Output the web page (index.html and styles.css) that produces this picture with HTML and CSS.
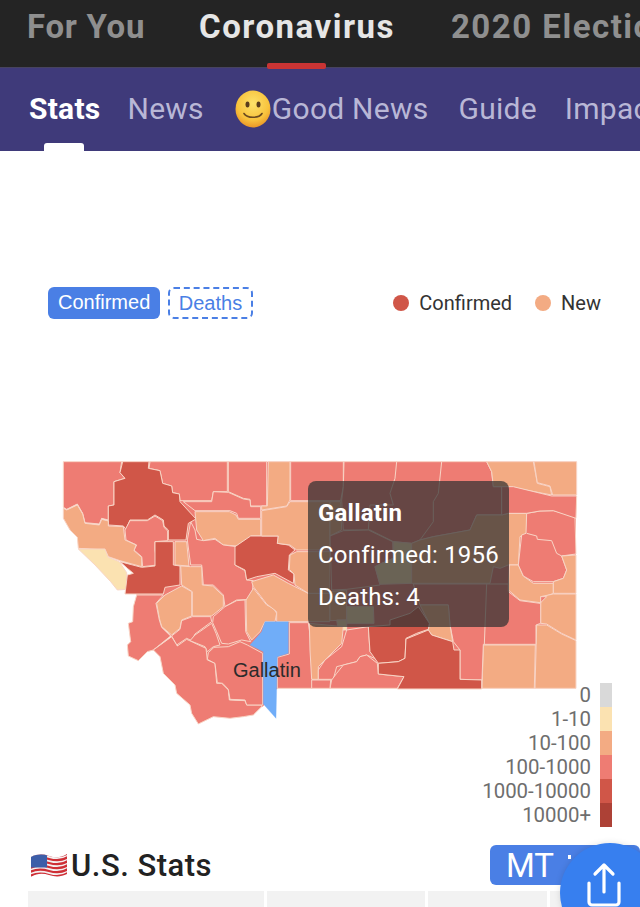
FILE: index.html
```html
<!DOCTYPE html>
<html lang="en">
<head>
<meta charset="utf-8">
<title>Coronavirus Stats</title>
<link rel="stylesheet" href="styles.css">
</head>
<body>
<div class="page">
  <nav class="topnav">
    <span class="toptab">For You</span>
    <span class="toptab active">Coronavirus</span>
    <span class="toptab wide">2020 Election</span>
  </nav>
  <nav class="subnav">
    <span class="subtab active">Stats</span>
    <span class="subtab">News</span>
    <span class="subtab goodnews"><svg class="smile" viewBox="0 0 36 38"><defs><radialGradient id="fg" cx="50%" cy="35%" r="70%"><stop offset="0" stop-color="#fde26a"/><stop offset=".65" stop-color="#f8c23c"/><stop offset="1" stop-color="#e78b22"/></radialGradient></defs><ellipse cx="18" cy="19" rx="17.5" ry="18.5" fill="url(#fg)"/><ellipse cx="12.5" cy="14.5" rx="2" ry="3" fill="#5a3d1c"/><ellipse cx="23.500" cy="14.500" rx="2" ry="3" fill="#5a3d1c"/><path d="M9 23.500c3 5 15 5 18 0" fill="none" stroke="#6b4a20" stroke-width="1.600" stroke-linecap="round"/></svg>Good News</span>
    <span class="subtab guide">Guide</span>
    <span class="subtab">Impact</span>
  </nav>
  <main class="content">
    <div class="toolbar">
      <div class="toggles">
        <span class="toggle on">Confirmed</span>
        <span class="toggle off">Deaths</span>
      </div>
      <div class="keys">
        <span class="key"><i class="dot dot-confirmed"></i>Confirmed</span>
        <span class="key"><i class="dot dot-new"></i>New</span>
      </div>
    </div>
    <div class="mapwrap">
      <svg class="map" viewBox="0 450 640 290" width="640" height="290">
        <g transform="translate(40 450) scale(.33333)">
          <polygon class="s base" points="205,35 870,35 870,715 712,715 668,770 500,700 395,560 290,435 262,300 205,225"/>
          <polygon class="s" points="70,35 245,35 240,68 255,85 222,95 222,165 205,168 205,210 185,205 178,222 135,218 128,190 112,162 80,178 70,172"/>
          <polygon class="s" points="330,35 562,35 562,125 520,125 515,152 420,152 418,132 398,128 395,108 368,100 360,62 327,55"/>
          <polygon class="s" points="565,35 680,35 680,168 632,168 630,148 610,145 565,125"/>
          <polygon class="o" points="685,35 750,35 750,150 740,168 665,180 665,168 682,168"/>
          <polygon class="s" points="515,155 520,125 565,127 610,147 630,150 632,170 662,170 662,205 595,205 590,190 570,182 465,182 430,155"/>
          <polygon class="o" points="465,185 568,185 588,195 595,208 662,208 662,258 632,258 620,272 590,288 550,285 525,265 490,272 470,240"/>
          <polygon class="s" points="452,215 465,240 470,268 490,272 525,268 550,285 590,290 585,345 615,362 620,390 640,392 635,448 590,450 555,470 550,435 520,405 490,405 485,345 452,345 442,270"/>
          <polygon class="d" points="248,35 327,35 325,55 360,62 368,100 395,108 398,128 418,132 420,155 468,207 445,220 438,270 385,270 385,240 372,228 370,210 345,195 322,210 270,210 258,238 250,228 205,225 205,168 222,165 222,95 255,85 240,68"/>
          <polygon class="s" points="270,212 322,212 345,198 368,212 372,232 383,243 383,272 345,275 345,300 352,345 308,350 305,320 282,300 290,285 258,270 255,240"/>
          <polygon class="o" points="70,175 80,180 112,165 128,192 135,220 178,225 185,208 205,213 205,228 250,230 255,270 288,285 282,302 305,322 305,350 240,332 205,320 195,300 115,295 112,262 90,240 70,205"/>
          <polygon class="c" points="115,297 195,297 205,322 238,335 260,368 262,418 232,420 212,395 165,345"/>
          <polygon class="d" points="240,335 305,352 345,348 345,275 400,275 400,345 420,348 420,405 375,412 370,432 255,432 262,375 280,370 262,355"/>
          <polygon class="o" points="405,275 440,275 447,348 405,345"/>
          <polygon class="d" points="585,290 632,258 715,258 712,280 745,285 765,300 748,315 745,360 762,372 760,400 705,370 650,380 620,390 615,360 585,345"/>
          <polygon class="o" points="452,350 485,350 487,405 518,408 550,438 550,470 515,498 457,498 457,425 425,405 422,348"/>
          <polygon class="o" points="425,408 455,425 455,498 425,510 420,535 395,555 365,530 358,505 350,460 375,435"/>
          <polygon class="s" points="290,435 370,435 348,460 358,510 365,532 392,558 340,600 322,605 295,632 265,618 262,585 272,575 265,520 278,515 280,470"/>
          <polygon class="s" points="425,512 457,500 512,500 515,515 465,552 455,572 440,565 410,585 395,558 420,538"/>
          <polygon class="s" points="518,518 520,500 555,470 590,452 615,450 617,545 632,575 605,570 565,582 545,580 530,545"/>
          <polygon class="s" points="465,555 515,520 528,550 540,585 520,590 502,605 495,590 450,572"/>
          <polygon class="s" points="395,560 412,588 440,568 498,595 502,630 525,640 530,700 545,700 565,720 568,750 615,752 620,765 665,765 665,770 640,795 610,800 570,805 520,800 475,822 455,790 450,765 410,730 405,705 370,670 360,620 340,600"/>
          <polygon class="s" points="505,608 522,592 565,590 600,575 622,585 668,610 668,765 620,765 615,750 570,748 565,718 548,700 532,698 525,640 502,628"/>
          <polygon class="o" points="618,450 640,415 660,440 680,465 700,475 710,490 705,515 675,515 660,545 635,570 620,545"/>
          <polygon class="o" points="635,395 700,375 745,400 765,410 805,430 870,430 870,515 710,515 710,485 680,462 640,410"/>
          <polygon class="o" points="665,182 740,170 750,155 870,155 870,300 770,300 750,285 712,280 715,258 665,258"/>
          <polygon class="o" points="770,305 870,305 870,430 805,430 765,405 762,372 748,358 750,315"/>
          <polygon class="s" points="712,622 748,612 748,518 805,518 815,590 818,688 818,715 712,715"/>
          <polygon class="b" points="675,515 745,515 745,610 712,620 708,805 670,762 670,605 630,585 665,545"/>
        </g>
        <g transform="translate(300 450) scale(.33333)">
          <polygon class="s base" points="90,35 828,35 828,715 90,715"/>
          <polygon class="s" points="-28,35 130,35 130,110 122,152 -28,152"/>
          <polygon class="o" points="90,155 122,155 125,240 90,258"/>
          <polygon class="s" points="132,35 560,35 575,65 580,110 605,110 605,195 530,195 510,240 400,260 360,270 335,280 280,275 210,240 130,240 125,150 130,110"/>
          <polyline class="l" points="290,35 285,85 270,130 280,165 210,165 205,240"/>
          <polyline class="l" points="425,35 415,130 400,155 400,215 360,270"/>
          <polygon class="s" points="90,258 130,242 205,240 278,275 280,325 245,340 225,350 240,405 140,418 95,420"/>
          <polygon class="c" points="280,275 335,280 335,400 240,403 225,350 245,340 280,325"/>
          <polygon class="o" points="90,425 140,420 140,510 90,512"/>
          <polygon class="c" points="140,470 220,470 222,520 140,520"/>
          <polygon class="c" points="110,510 140,510 140,540 115,540"/>
          <polygon class="o" points="335,280 360,270 400,260 510,240 530,195 605,195 625,190 680,190 680,250 660,260 655,345 625,345 600,355 580,350 570,400 335,400"/>
          <polygon class="o" points="628,345 655,345 670,378 700,400 760,400 760,430 740,438 720,458 660,450 625,420"/>
          <polygon class="s" points="680,190 720,183 760,182 825,200 828,312 785,318 800,360 790,385 760,395 700,395 670,378 655,345 665,255 678,250"/>
          <polyline class="l" points="680,250 710,258 712,268 755,272 770,310 785,318"/>
          <polygon class="o" points="560,35 700,35 712,100 750,110 755,135 625,110 580,110 575,65"/>
          <polygon class="o" points="702,35 830,35 830,135 758,135 750,108 712,98"/>
          <polygon class="s" points="605,110 640,110 755,138 830,138 828,205 760,182 720,183 680,190 625,190 605,195"/>
          <polygon class="o" points="785,318 828,315 828,430 760,430 760,395 790,385 800,360"/>
          <polygon class="o" points="722,440 760,432 828,432 828,570 785,550 740,522 722,520"/>
          <polygon class="o" points="710,525 740,525 785,552 828,572 828,715 705,715"/>
          <polygon class="o" points="550,585 706,585 703,715 546,715"/>
          <polygon class="s" points="340,402 625,402 625,425 660,452 720,460 740,440 722,440 722,520 708,525 708,583 550,583 546,690 480,688 480,600 460,575 450,525 445,465 360,465"/>
          <polyline class="l" points="560,402 553,583"/>
          <polygon class="o" points="28,520 130,530 125,580 75,630 55,650 55,688 35,688 30,600"/>
          <polygon class="s" points="140,540 205,530 210,605 235,630 200,615 180,620 170,635 110,650 100,688 55,688 55,660 75,630 125,590"/>
          <polygon class="s" points="232,640 200,615 180,620 170,635 130,645 110,670 95,690 90,715 292,715 312,680 235,672"/>
          <polygon class="s" points="35,690 92,690 90,715 35,715"/>
          <polygon class="o" points="360,465 445,465 450,525 458,575 395,555 385,540 388,520"/>
          <polygon class="d" points="270,510 330,490 355,470 388,520 385,538 350,550 318,565 315,625 295,635 235,640 210,605 205,530 270,525"/>
          <polygon class="d" points="318,567 385,540 395,555 458,575 462,600 480,600 480,688 545,690 545,717 292,717 312,680 235,672 235,640 295,635 315,625"/>
        </g>
        <text class="maplabel" x="233" y="677">Gallatin</text>
      </svg>
      <div class="tooltip">
        <div class="tip-title">Gallatin</div>
        <div class="tip-line">Confirmed: 1956</div>
        <div class="tip-line">Deaths: 4</div>
      </div>
      <div class="scale">
        <div class="scale-row"><span>0</span><i class="sw sw0"></i></div>
        <div class="scale-row"><span>1-10</span><i class="sw sw1"></i></div>
        <div class="scale-row"><span>10-100</span><i class="sw sw2"></i></div>
        <div class="scale-row"><span>100-1000</span><i class="sw sw3"></i></div>
        <div class="scale-row"><span>1000-10000</span><i class="sw sw4"></i></div>
        <div class="scale-row"><span>10000+</span><i class="sw sw5"></i></div>
      </div>
    </div>
    <div class="stats-head">
      <h2 class="stats-title"><svg class="flag" viewBox="0 0 38 26"><defs><clipPath id="wave"><path d="M1 5c6-3 12-3 18-1s12 2 18-2v20c-6 3-12 3-18 1s-12-2-18 2z"/></clipPath></defs><g clip-path="url(#wave)"><rect width="38" height="26" fill="#f4f0f0"/><g fill="none" stroke="#cf2f36" stroke-width="2.200"><path d="M0 4c6-3 12-3 19-1s13 2 19-2"/><path d="M0 8c6-3 12-3 19-1s13 2 19-2"/><path d="M0 12c6-3 12-3 19-1s13 2 19-2"/><path d="M0 16c6-3 12-3 19-1s13 2 19-2"/><path d="M0 20c6-3 12-3 19-1s13 2 19-2"/><path d="M0 24c6-3 12-3 19-1s13 2 19-2"/></g><rect width="17" height="14.500" y="1" fill="#3d5ea8"/></g></svg>U.S. Stats</h2>
      <span class="state-btn">MT<i class="caret"></i></span>
    </div>
    <div class="table-head">
      <span class="th"></span><span class="th"></span><span class="th"></span><span class="th"></span>
    </div>
  </main>
  <button class="fab" aria-label="Share"><svg class="share" viewBox="0 0 44 48"><path d="M19 31V4M10 13l9-9 9 9M4 22v19a3 3 0 0 0 3 3h24a3 3 0 0 0 3-3V22" fill="none" stroke="#fff" stroke-width="3.200" stroke-linecap="round" stroke-linejoin="round"/></svg></button>
</div>
</body>
</html>
```
FILE: styles.css
```css
* { box-sizing: border-box; }
html, body { margin: 0; padding: 0; background: #fff; }
.page { position: relative; width: 640px; height: 907px; overflow: hidden; font-family: Roboto, sans-serif; }

.topnav { display: flex; gap: 54px; height: 68px; padding: 8px 0 0 27px; background: #242424; border-bottom: 1px solid #47435f; white-space: nowrap; }
.toptab { position: relative; font-size: 33px; line-height: 38px; font-weight: 700; color: #8f8f8f; height: 59px; letter-spacing: .7px; }
.toptab.active { color: #e6e6e6; letter-spacing: 1.5px; margin-right: 2px; }
.toptab.wide { letter-spacing: 1.5px; }
.toptab.active::after { content: ""; position: absolute; left: 68px; width: 59px; top: 55px; height: 6px; border-radius: 2px; background: #c93434; }

.subnav { display: flex; gap: 30px; height: 83px; padding: 21px 0 0 29px; background: #3f3a7a; white-space: nowrap; }
.subtab { position: relative; font-size: 30px; letter-spacing: .25px; line-height: 40px; color: #b9b7d6; height: 40px; }
.subtab.active { color: #fff; font-weight: 700; margin-right: -3px; }
.subtab.active::after { content: ""; position: absolute; left: 15px; width: 40px; top: 54px; height: 8px; border-radius: 3px 3px 0 0; background: #fff; }
.goodnews { display: flex; align-items: center; }
.guide { margin-right: -2px; }
.smile { width: 36px; height: 38px; margin-right: 1px; margin-left: 1px; }

.content { display: block; }
.toolbar { display: flex; justify-content: space-between; align-items: center; height: 32px; margin-top: 136px; padding: 0 39px 0 48px; }
.toggles { display: flex; gap: 8px; }
.toggle { display: block; height: 32px; line-height: 31px; padding: 0 10px; font-family: "Liberation Sans", sans-serif; font-size: 20px; border-radius: 6px; }
.toggle.on { background: #4a7fe5; color: #fff; }
.toggle.off { border: 2px dashed #4a7fe5; color: #4a7fe5; line-height: 28px; padding: 0 8.5px; }
.keys { display: flex; gap: 23px; }
.key { display: flex; align-items: center; gap: 10px; font-size: 20px; line-height: 32px; color: #333; }
.dot { display: block; width: 16px; height: 16px; border-radius: 50%; }
.dot-confirmed { background: #d05648; }
.dot-new { background: #f3ab83; }

.mapwrap { position: relative; height: 377px; margin-top: 131px; }
.map { display: block; }
.map polygon, .l { stroke: #f8d5c6; stroke-width: 3; stroke-linejoin: round; }
.l { fill: none; }
.s { fill: #ee7c73; }
.o { fill: #f3ab83; }
.d { fill: #d05648; }
.c { fill: #fbe2b1; }
.b { fill: #70adf8; }
.map polygon.base { stroke: none; }
.map polygon.b { stroke: #70adf8; stroke-width: 1; }
.maplabel { font-family: "Liberation Sans", sans-serif; font-size: 20px; fill: #2b2b2b; }

.tooltip { position: absolute; left: 308px; top: 31px; width: 201px; height: 146px; padding: 11px 10px; background: rgba(50, 50, 50, .72); border-radius: 8px; color: #fff; font-size: 24px; letter-spacing: .2px; line-height: 42px; white-space: nowrap; }
.tip-title { font-weight: 700; }

.scale { position: absolute; right: 28px; top: 233px; }
.scale-row { display: flex; justify-content: flex-end; align-items: center; gap: 9px; height: 24px; font-size: 20.4px; color: #6e6e6e; }
.sw { display: block; width: 12px; height: 24px; }
.sw0 { background: #d9d9d9; }
.sw1 { background: #fbe2b1; }
.sw2 { background: #f3ab83; }
.sw3 { background: #ee7c73; }
.sw4 { background: #d05648; }
.sw5 { background: #ad4136; }

.stats-head { display: flex; justify-content: space-between; align-items: center; height: 40px; margin-top: 18px; padding-left: 30px; }
.stats-title { display: flex; align-items: center; gap: 3px; margin: 0; font-size: 31px; letter-spacing: .5px; font-weight: 500; color: #222; }
.flag { width: 38px; height: 26px; }
.state-btn { display: flex; align-items: center; width: 150px; height: 40px; padding-left: 16px; border-radius: 6px; background: #4a7fe5; color: #fff; font-size: 33px; }
.caret { display: block; width: 3px; height: 4px; margin: -16px 0 0 14px; background: #fff; }

.table-head { display: grid; grid-template-columns: 236px 158px 119px 1fr; gap: 3px; margin: 6px 0 0 28px; }
.th { display: block; height: 16px; background: #f2f2f2; }

.fab { position: absolute; left: 560px; top: 843px; width: 100px; height: 100px; padding: 0; border: 0; border-radius: 50%; background: #377fef; box-shadow: 0 0 6px rgba(0, 0, 0, .12); }
.share { position: absolute; left: 25px; top: 18px; width: 44px; height: 48px; }
```
